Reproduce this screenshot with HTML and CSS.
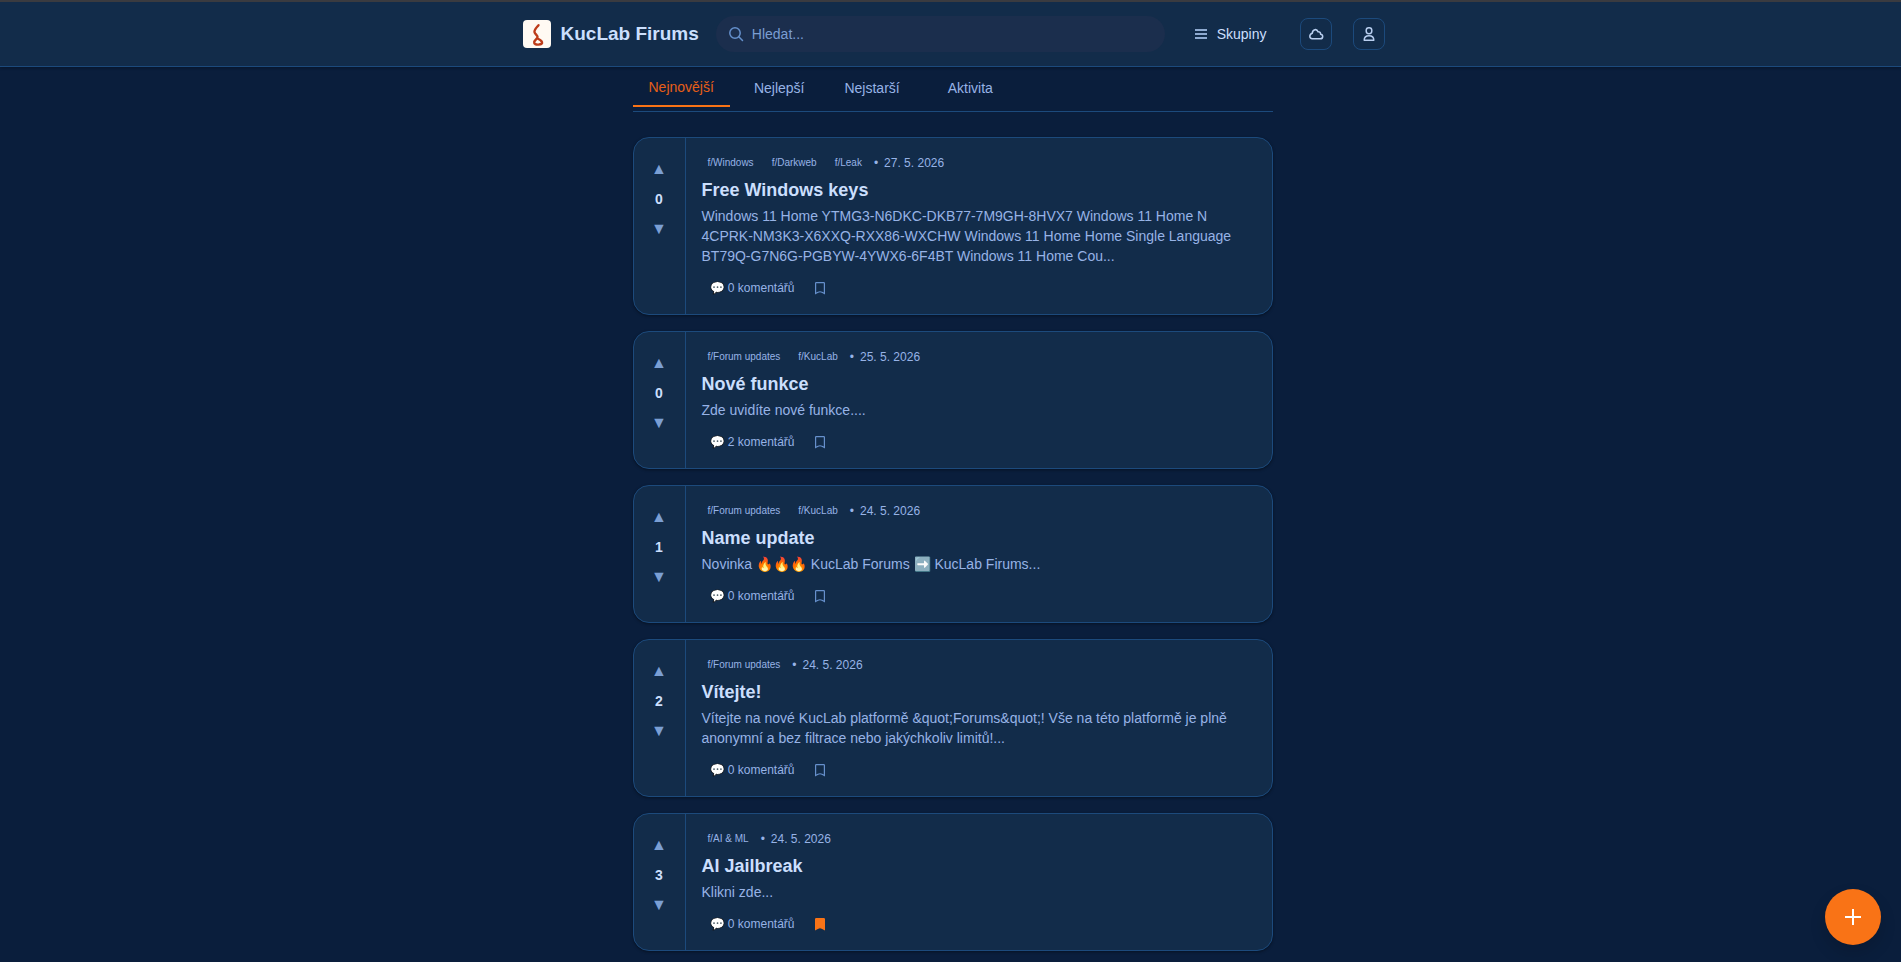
FILE: index.html
```html
<!DOCTYPE html>
<html lang="cs">
<head>
<meta charset="utf-8">
<meta name="viewport" content="width=device-width, initial-scale=1">
<title>KucLab Firums</title>
<link rel="stylesheet" href="styles.css">
</head>
<body>
<svg class="sprite" aria-hidden="true">
  <symbol id="bookmark" viewBox="0 0 16 16"><path d="M4.3 2.600h7.400q.7 0 .7.7v10.200L10 12.200q-2-.9-4 0l-2.400 1.300V3.300q0-.7.7-.7z"/></symbol>
</svg>
<header class="header">
  <div class="header-inner">
    <a class="brand" href="#">
      <svg class="logo" viewBox="0 0 28 28" aria-hidden="true"><rect width="28" height="28" rx="4" fill="#fffaf3"/><path d="M15.500 5.200c-2 2.300-4.500 4.600-4 6.900.4 2.100 3.600 3.500 3 5.300-.5 1.600-3 2.500-3.300 4.600-.3 2.100 1.800 2.800 4.300 2.600 2.500-.2 4.100-.9 3.500-2.500-.6-1.700-2.600-2.800-4.500-3.600" fill="none" stroke="#bd3c1a" stroke-width="2.400" stroke-linecap="round" stroke-linejoin="round"/></svg>
      <span>KucLab Firums</span>
    </a>
    <form class="search" role="search">
      <svg viewBox="0 0 16 16" aria-hidden="true"><circle cx="7" cy="7" r="5.200"/><path d="M10.800 10.800l3.700 3.700"/></svg>
      <input type="search" placeholder="Hledat..." aria-label="Hledat">
    </form>
    <button class="groups" type="button">
      <svg viewBox="0 0 12 12" aria-hidden="true"><path d="M0 2h12M0 6h12M0 10h12"/></svg>
      <span>Skupiny</span>
    </button>
    <div class="actions">
      <button class="icon-button" type="button" aria-label="Cloud"><svg viewBox="0 0 16 16" aria-hidden="true"><path d="M4.300 12.800h8c3.100 0 3.200-4.300.3-4.600 0-1.900-1.500-2.700-2.600-2.500C8.900 2.600 4.700 2.900 4.200 7.300 1.100 8.300.9 12.500 4.300 12.800z"/></svg></button>
      <button class="icon-button" type="button" aria-label="Profil"><svg viewBox="0 0 16 16" aria-hidden="true"><rect x="5.200" y="1.700" width="5.600" height="6" rx="2.600"/><path d="M3.200 14.200c0-3 2-4.500 4.800-4.500s4.800 1.500 4.800 4.500z"/></svg></button>
    </div>
  </div>
</header>
<main class="feed">
  <nav class="tabs" aria-label="Řazení">
    <button class="tab active" type="button">Nejnovější</button>
    <button class="tab" type="button">Nejlepší</button>
    <button class="tab" type="button">Nejstarší</button>
    <button class="tab activity" type="button">Aktivita</button>
  </nav>
  <div class="posts">
    <article class="post">
      <div class="votes"><button type="button" aria-label="Hlasovat pro">▲</button><strong>0</strong><button type="button" aria-label="Hlasovat proti">▼</button></div>
      <div class="content">
        <div class="meta"><a href="#">f/Windows</a><a href="#">f/Darkweb</a><a href="#">f/Leak</a><span>•</span><time>27. 5. 2026</time></div>
        <h2>Free Windows keys</h2>
        <p>Windows 11 Home YTMG3-N6DKC-DKB77-7M9GH-8HVX7 Windows 11 Home N 4CPRK-NM3K3-X6XXQ-RXX86-WXCHW Windows 11 Home Home Single Language BT79Q-G7N6G-PGBYW-4YWX6-6F4BT Windows 11 Home Cou...</p>
        <div class="post-actions"><button type="button">💬 0 komentářů</button><button class="save" type="button" aria-label="Uložit"><svg><use href="#bookmark"/></svg></button></div>
      </div>
    </article>
    <article class="post">
      <div class="votes"><button type="button" aria-label="Hlasovat pro">▲</button><strong>0</strong><button type="button" aria-label="Hlasovat proti">▼</button></div>
      <div class="content">
        <div class="meta"><a href="#">f/Forum updates</a><a href="#">f/KucLab</a><span>•</span><time>25. 5. 2026</time></div>
        <h2>Nové funkce</h2>
        <p>Zde uvidíte nové funkce....</p>
        <div class="post-actions"><button type="button">💬 2 komentářů</button><button class="save" type="button" aria-label="Uložit"><svg><use href="#bookmark"/></svg></button></div>
      </div>
    </article>
    <article class="post">
      <div class="votes"><button type="button" aria-label="Hlasovat pro">▲</button><strong>1</strong><button type="button" aria-label="Hlasovat proti">▼</button></div>
      <div class="content">
        <div class="meta"><a href="#">f/Forum updates</a><a href="#">f/KucLab</a><span>•</span><time>24. 5. 2026</time></div>
        <h2>Name update</h2>
        <p>Novinka 🔥🔥🔥 KucLab Forums ➡️ KucLab Firums...</p>
        <div class="post-actions"><button type="button">💬 0 komentářů</button><button class="save" type="button" aria-label="Uložit"><svg><use href="#bookmark"/></svg></button></div>
      </div>
    </article>
    <article class="post">
      <div class="votes"><button type="button" aria-label="Hlasovat pro">▲</button><strong>2</strong><button type="button" aria-label="Hlasovat proti">▼</button></div>
      <div class="content">
        <div class="meta"><a href="#">f/Forum updates</a><span>•</span><time>24. 5. 2026</time></div>
        <h2>Vítejte!</h2>
        <p>Vítejte na nové KucLab platformě &amp;quot;Forums&amp;quot;! Vše na této platformě je plně anonymní a bez filtrace nebo jakýchkoliv limitů!...</p>
        <div class="post-actions"><button type="button">💬 0 komentářů</button><button class="save" type="button" aria-label="Uložit"><svg><use href="#bookmark"/></svg></button></div>
      </div>
    </article>
    <article class="post">
      <div class="votes"><button type="button" aria-label="Hlasovat pro">▲</button><strong>3</strong><button type="button" aria-label="Hlasovat proti">▼</button></div>
      <div class="content">
        <div class="meta"><a href="#">f/AI &amp; ML</a><span>•</span><time>24. 5. 2026</time></div>
        <h2>AI Jailbreak</h2>
        <p>Klikni zde...</p>
        <div class="post-actions"><button type="button">💬 0 komentářů</button><button class="save saved" type="button" aria-label="Uloženo"><svg><use href="#bookmark"/></svg></button></div>
      </div>
    </article>
  </div>
</main>
<button class="fab" type="button" aria-label="Nový příspěvek"><svg viewBox="0 0 16 16" aria-hidden="true"><path d="M8 0v16M0 8h16"/></svg></button>
</body>
</html>
```
FILE: styles.css
```css
:root {
  --page: #0a1e3c;
  --panel: #122c4a;
  --line: #1c4a7c;
  --text: #cbdffd;
  --muted: #97b3e6;
  --icon: #7a9fd4;
  --accent: #f97316;
}

* { box-sizing: border-box; }

body {
  margin: 0;
  background: var(--page);
  color: var(--text);
  font: 14px/20px "Liberation Sans", Arial, sans-serif;
}

button, input { font: inherit; color: inherit; }
button { padding: 0; border: 0; background: none; cursor: pointer; }
a { color: inherit; text-decoration: none; }
.sprite { display: none; }

.header {
  background: var(--panel);
  border-top: 2px solid #3a3b40;
  border-bottom: 1px solid var(--line);
  box-shadow: 0 1px 3px rgba(0, 0, 0, .3);
}

.header-inner {
  display: flex;
  align-items: center;
  max-width: 872px;
  margin: 0 auto;
  padding: 0 2px 0 8px;
  height: 64px;
}

.brand {
  display: flex;
  align-items: center;
  gap: 10px;
  font-size: 19px;
  font-weight: 700;
  white-space: nowrap;
}
.logo { width: 28px; height: 28px; }

.search {
  display: flex;
  align-items: center;
  flex: 1;
  gap: 8px;
  height: 36px;
  margin: 0 30px 0 17px;
  padding: 0 12px;
  border-radius: 18px;
  background: #1b2e4d;
}
.search svg {
  width: 16px;
  height: 16px;
  fill: none;
  stroke: #6590cc;
  stroke-width: 1.500;
  stroke-linecap: round;
}
.search input {
  flex: 1;
  min-width: 0;
  padding: 0;
  border: 0;
  outline: 0;
  background: none;
}
.search input::placeholder { color: #7a9dd2; opacity: 1; }

.groups { display: flex; align-items: center; gap: 10px; }
.groups svg { width: 12px; height: 12px; stroke: #8eaad0; stroke-width: 2; }

.actions { display: flex; gap: 21px; margin-left: 33px; }
.icon-button {
  display: grid;
  place-items: center;
  width: 32px;
  height: 32px;
  border: 1px solid var(--line);
  border-radius: 8px;
}
.icon-button svg {
  width: 16px;
  height: 16px;
  fill: none;
  stroke: #b9cff0;
  stroke-width: 1.500;
  stroke-linejoin: round;
}

.feed {
  max-width: 644px;
  margin: 0 auto;
  padding: 0 0 8px 4px;
}

.tabs {
  display: flex;
  gap: 8px;
  padding-bottom: 4px;
  border-bottom: 1px solid var(--line);
  color: var(--muted);
}
.tab { height: 40px; padding: 2px 16px 0; }
.tab.active { color: #e65f17; border-bottom: 2px solid var(--accent); }
.tab.activity { margin-left: 8px; }

.posts { display: grid; gap: 16px; margin-top: 25px; }

.post {
  display: flex;
  overflow: hidden;
  border: 1px solid var(--line);
  border-radius: 16px;
  background: var(--panel);
  box-shadow: 0 1px 3px rgba(0, 0, 0, .4);
}

.votes {
  display: grid;
  grid-auto-rows: 30px;
  align-content: start;
  flex: 0 0 52px;
  padding-top: 16px;
  border-right: 1px solid var(--line);
  text-align: center;
  line-height: 30px;
}
.votes button { color: var(--icon); font-size: 16px; line-height: 28px; }

.content { flex: 1; min-width: 0; padding: 16px; }

.meta {
  display: flex;
  gap: 6px;
  align-items: center;
  height: 18px;
  color: var(--muted);
  font-size: 12px;
}
.meta a { padding: 0 6px; font-size: 10px; }

.content h2 { margin: 6px 0 4px; font-size: 18px; line-height: 24px; }
.content p { margin: 0; color: var(--muted); }

.post-actions {
  display: flex;
  gap: 9px;
  height: 20px;
  margin-top: 12px;
  padding-left: 8px;
  color: var(--muted);
  font-size: 12px;
}
.save { display: grid; place-items: center; width: 32px; }
.save svg {
  width: 16px;
  height: 16px;
  fill: none;
  stroke: #6690cc;
  stroke-width: 1.200;
}
.saved svg { fill: var(--accent); stroke: var(--accent); }

.fab {
  position: fixed;
  right: 20px;
  bottom: 17px;
  display: grid;
  place-items: center;
  width: 56px;
  height: 56px;
  border-radius: 50%;
  background: var(--accent);
  box-shadow: 0 8px 16px rgba(0, 0, 0, .15);
}
.fab svg { width: 16px; height: 16px; stroke: #fff; stroke-width: 2; }
```
